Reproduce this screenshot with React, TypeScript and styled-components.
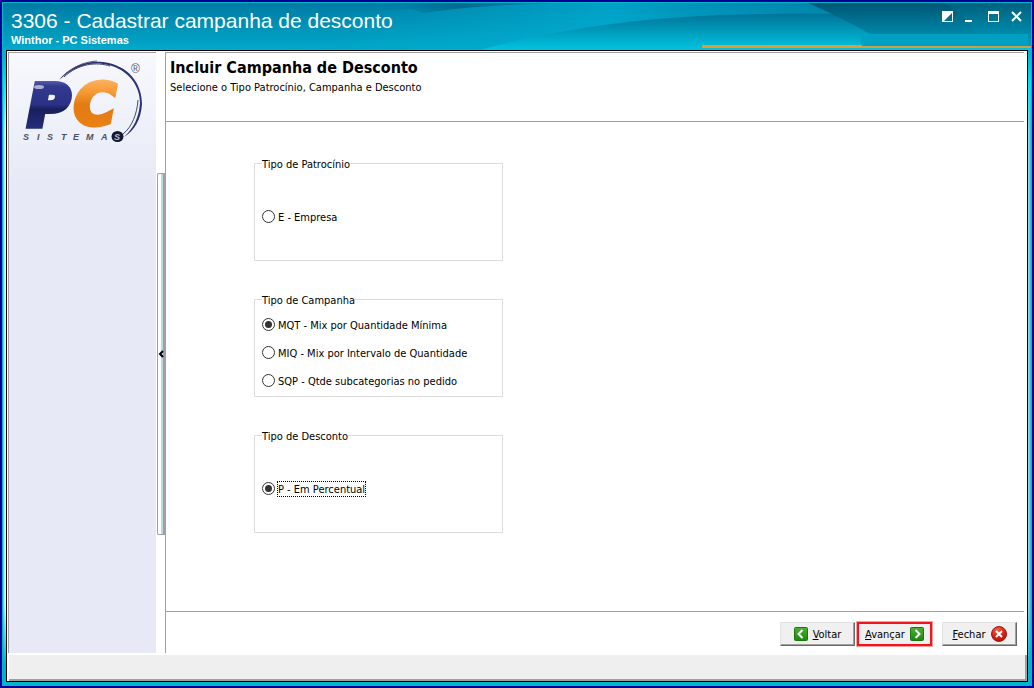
import React from 'react';
import styled, { createGlobalStyle } from 'styled-components';

const GlobalStyle = createGlobalStyle`
  *, *::before, *::after { box-sizing: border-box; }
  body { margin: 0; background: #000080; }
  body, button, input {
    font-family: 'DejaVu Sans Condensed', Tahoma, sans-serif;
    font-size: 11px;
    line-height: 13px;
    color: #000;
  }
`;

const AppWindow = styled.div`
  display: flex;
  flex-direction: column;
  min-height: 100vh;
  border: 2px solid #000090;
`;

const Frame = styled.div`
  display: flex;
  flex-direction: column;
  flex: 1;
  padding: 0 3px 3px;
  border: 1px solid #00b4cc;
  background:
    linear-gradient(#00a4c4 0, #00b4cc 52px, #00e0f0 78px, transparent 130px, transparent 88%, #00b4cc 97%),
    linear-gradient(90deg, #40c8d8 0, #d8fafc 2px, #fff 3px, #fff 50%, #a0e4ec calc(100% - 3px), #20bcd0 100%);
`;

const TitleBar = styled.header`
  position: relative;
  display: flex;
  justify-content: space-between;
  height: 47px;
  margin: 0 -3px;
  padding: 6px 8px 0;
  color: #fff;
  font-family: 'Liberation Sans', Arial, sans-serif;
`;

const Waves = styled.svg`
  position: absolute;
  inset: 0;
  width: 100%;
  height: 100%;
`;

const Titles = styled.div`
  position: relative;
`;

const Title = styled.h1`
  margin: 0;
  font-size: 21px;
  line-height: 24px;
  font-weight: 400;
`;

const Subtitle = styled.p`
  margin: 0;
  font-size: 11px;
  line-height: 14px;
  font-weight: 700;
`;

const WindowButtons = styled.div`
  position: relative;
  display: flex;
  gap: 11px;
  height: 13px;
  margin-top: 1px;
`;

const WindowButton = styled.button`
  display: flex;
  padding: 0;
  border: 0;
  background: none;
  color: #fff;
`;

const Client = styled.div`
  display: flex;
  flex-direction: column;
  flex: 1;
  border: 1px solid #000;
  background: #fff;
`;

const Panels = styled.div`
  display: flex;
  flex: 1;
  margin: 1px 0 0 1px;
`;

const Sidebar = styled.aside`
  width: 148px;
  flex: none;
  border-top: 1px solid #a0a0a0;
  border-left: 1px solid #a0a0a0;
  background: linear-gradient(#f8f8fd 0, #f0f2fa 60px, #e7eaf6 130px);
`;

const Splitter = styled.div`
  display: flex;
  flex-direction: column;
  flex: none;
  width: 9px;
  padding: 121px 0 118px 1px;
`;

const SplitterGrip = styled.button`
  flex: 1;
  display: flex;
  align-items: center;
  padding: 0;
  border: 1px solid #a0a0a0;
  border-right: 0;
  border-radius: 2px 0 0 2px;
  background: linear-gradient(90deg, #fff 3px, #b9d9e8 3px, #b9d9e8 5px, #a0a0a0 5px);
`;

const Main = styled.main`
  display: flex;
  flex-direction: column;
  flex: 1;
  margin-right: 3px;
  border-top: 1px solid #a0a0a0;
  border-left: 1px solid #a0a0a0;
`;

const PageHeader = styled.div`
  height: 69px;
  padding: 5px 4px;
  border-bottom: 1px solid #a0a0a0;
`;

const Heading = styled.h2`
  margin: 0 0 3px;
  font-size: 16px;
  line-height: 20px;
  font-weight: 700;
`;

const Description = styled.p`
  margin: 0;
`;

const Form = styled.form`
  display: flex;
  flex-direction: column;
  gap: 31px;
  flex: 1;
  padding: 34px 88px;
`;

const Group = styled.fieldset`
  width: 249px;
  height: 105px;
  margin: 0;
  padding: 0 7px;
  border: 1px solid #dcdcdc;
`;

const Legend = styled.legend`
  padding: 2px 0 0;
`;

const Options = styled.div`
  display: flex;
  flex-direction: column;
  justify-content: center;
  height: 89px;
  padding-top: 2px;
`;

const Option = styled.label`
  display: flex;
  align-items: center;
  gap: 2px;
  height: 28px;
`;

const Radio = styled.input`
  appearance: none;
  width: 13px;
  height: 13px;
  margin: 0;
  padding: 2px;
  border: 1px solid #333;
  border-radius: 50%;
  background: #fff content-box;
  &:checked { background-color: #333; }
`;

const OptionText = styled.span<{ $focused?: boolean }>`
  padding-top: 1px;
  border: 1px dotted ${p => (p.$focused ? '#000' : 'transparent')};
`;

const Actions = styled.div`
  display: flex;
  justify-content: flex-end;
  height: 42px;
  padding: 10px 7px 0;
  border-top: 1px solid #a0a0a0;
`;

const ActionButton = styled.button<{ $highlight?: boolean; $apart?: boolean }>`
  display: flex;
  align-items: center;
  justify-content: center;
  gap: 5px;
  width: 75px;
  height: 24px;
  margin-left: ${p => (p.$apart ? 10 : 2)}px;
  padding: 0;
  border: 1px solid;
  border-color: #e3e3e3 #696969 #696969 #e3e3e3;
  box-shadow: inset -1px -1px #a0a0a0;
  background: #f0f0f0;
  ${p => p.$highlight && 'border: 2px solid #f5141b; box-shadow: 0 0 0 1px #f9a0a0;'}
`;

const StatusBar = styled.footer`
  height: 26px;
  margin: 2px 0 0 2px;
  border: 2px solid #a0a0a0;
  border-width: 0 2px 2px 0;
  background: #efefef;
`;

const Logo = () => (
  <svg width="147" height="110" viewBox="9 53 147 110" role="img" aria-label="PC Sistemas">
    <defs>
      <linearGradient id="blue" x1="0" y1="0" x2="0" y2="1">
        <stop offset="0" stopColor="#8c93d0" />
        <stop offset=".2" stopColor="#33398f" />
        <stop offset=".48" stopColor="#2b3184" />
        <stop offset=".55" stopColor="#191f5c" />
        <stop offset="1" stopColor="#2b358c" />
      </linearGradient>
      <linearGradient id="orange" x1="0" y1="0" x2="0" y2="1">
        <stop offset="0" stopColor="#ffc27a" />
        <stop offset=".3" stopColor="#f79a35" />
        <stop offset=".5" stopColor="#e37a12" />
        <stop offset="1" stopColor="#ee8418" />
      </linearGradient>
    </defs>
    <path d="M59 80C70 66 87 60 103 62C128 65 142 83 142 104C141 119 135 130 124 137C134 128 139 117 140 103C140 84 126 67 103 64C87 62 73 68 59 80Z" fill="#2a3272" />
    <path d="M64 77C79 63 97 62 110 66M138 100C137 114 132 127 123 134" fill="none" stroke="#40466f" strokeWidth="1" />
    <path d="M61 78C71 68 82 62 97 61" fill="none" stroke="#555a70" strokeWidth="1" />
    <g fontFamily="DejaVu Sans" fontWeight="700" fontStyle="italic" fontSize="57" strokeLinejoin="miter">
      <text x="74" y="125" fill="url(#orange)" stroke="url(#orange)" strokeWidth="5">C</text>
      <text x="28" y="126" fill="url(#blue)" stroke="url(#blue)" strokeWidth="6">P</text>
    </g>
    <ellipse cx="39" cy="87" rx="5" ry="2" fill="#fff" opacity=".6" />
    <ellipse cx="117.500" cy="136.500" rx="6" ry="5.500" fill="#14172f" />
    <g fontFamily="Liberation Sans" fontStyle="italic" fontSize="9" fontWeight="700">
      <text x="23 37 47 61 73 86 101" y="140" fill="#4c4f5e">SISTEMA</text>
      <text x="114" y="140" fill="#bbbfd0">S</text>
    </g>
    <text x="131" y="73" fontFamily="Liberation Sans" fontSize="12" fill="#555a70">®</text>
  </svg>
);

const HeaderWaves = () => (
  <Waves viewBox="3 3 1028 47" preserveAspectRatio="none" aria-hidden="true">
    <defs>
      <linearGradient id="base" x1="0" y1="0" x2="0" y2="1">
        <stop offset="0" stopColor="#007ba4" />
        <stop offset="1" stopColor="#00a9ca" />
      </linearGradient>
      <linearGradient id="upper" x1="0" y1="0" x2="1" y2="0">
        <stop offset="0" stopColor="#00b0d0" stopOpacity="0" />
        <stop offset=".4" stopColor="#00b0d4" stopOpacity=".7" />
        <stop offset=".7" stopColor="#0090b4" stopOpacity=".4" />
        <stop offset="1" stopColor="#0090b4" stopOpacity=".4" />
      </linearGradient>
      <linearGradient id="lower" x1="0" y1="0" x2="0" y2="1">
        <stop offset="0" stopColor="#007397" />
        <stop offset=".5" stopColor="#009cbc" />
        <stop offset="1" stopColor="#00c4e0" />
      </linearGradient>
      <linearGradient id="dark" x1="0" y1="0" x2="0" y2="1">
        <stop offset="0" stopColor="#005574" />
        <stop offset="1" stopColor="#0087a8" />
      </linearGradient>
      <linearGradient id="corner" x1="0" y1="0" x2="0" y2="1">
        <stop offset="0" stopColor="#00607e" />
        <stop offset="1" stopColor="#009cbc" />
      </linearGradient>
      <linearGradient id="shade" x1="0" y1="0" x2="1" y2="0">
        <stop offset="0" stopColor="#006a90" stopOpacity="0" />
        <stop offset=".4" stopColor="#006a90" />
        <stop offset="1" stopColor="#007ea6" />
      </linearGradient>
    </defs>
    <rect x="3" y="3" width="1028" height="47" fill="url(#base)" />
    <path d="M330 50V14Q430 7 550 3H1031V50Z" fill="url(#upper)" />
    <path d="M400 3H550Q470 6 424 13Q410 10 400 3Z" fill="url(#shade)" />
    <path d="M480 50Q590 20 720 15Q870 10 1031 22V50Z" fill="url(#lower)" />
    <path d="M808 3H1031V34H870Q842 18 808 3Z" fill="url(#dark)" />
    <path d="M945 3H1031V46H984Q970 18 945 3Z" fill="url(#corner)" />
    <rect x="861" y="34" width="167" height="12" fill="#00a0c2" />
    <rect x="702" y="45" width="160" height="3" fill="#e99a2c" />
    <rect x="861" y="46" width="170" height="2" fill="#cf9d42" />
  </Waves>
);

const Arrow = ({ back }: { back?: boolean }) => (
  <svg width="14" height="14" viewBox="0 0 14 14" aria-hidden="true">
    <defs>
      <linearGradient id="green" x1="0" y1="0" x2="0" y2="1">
        <stop offset="0" stopColor="#4fae35" />
        <stop offset="1" stopColor="#188a0c" />
      </linearGradient>
    </defs>
    <rect x=".5" y=".5" width="13" height="13" rx="1" fill="url(#green)" stroke="#19780f" />
    <path d={back ? 'M8.500 3L4.500 7L8.500 11' : 'M5.500 3L9.500 7L5.500 11'} fill="none" stroke="#fff" strokeWidth="2" />
  </svg>
);

const CloseIcon = () => (
  <svg width="16" height="16" viewBox="0 0 16 16" aria-hidden="true">
    <defs>
      <radialGradient id="red" cx=".4" cy=".25" r=".8">
        <stop offset="0" stopColor="#f0604c" />
        <stop offset=".6" stopColor="#d6200f" />
        <stop offset="1" stopColor="#b01008" />
      </radialGradient>
    </defs>
    <circle cx="8" cy="8" r="7.500" fill="url(#red)" stroke="#a5180f" />
    <path d="M5 5L11 11M11 5L5 11" stroke="#fff" strokeWidth="2" />
  </svg>
);

type Choice = { label: string; checked?: boolean; focused?: boolean };

const groups: { name: string; title: string; choices: Choice[] }[] = [
  { name: 'patrocinio', title: 'Tipo de Patrocínio', choices: [{ label: 'E - Empresa' }] },
  {
    name: 'campanha',
    title: 'Tipo de Campanha',
    choices: [
      { label: 'MQT - Mix por Quantidade Mínima', checked: true },
      { label: 'MIQ - Mix por Intervalo de Quantidade' },
      { label: 'SQP - Qtde subcategorias no pedido' },
    ],
  },
  { name: 'desconto', title: 'Tipo de Desconto', choices: [{ label: 'P - Em Percentual', checked: true, focused: true }] },
];

export default function App() {
  return (
    <AppWindow>
      <GlobalStyle />
      <Frame>
        <TitleBar>
          <HeaderWaves />
          <Titles>
            <Title>3306 - Cadastrar campanha de desconto</Title>
            <Subtitle>Winthor - PC Sistemas</Subtitle>
          </Titles>
          <WindowButtons>
            <WindowButton aria-label="Alternar">
              <svg width="12" height="13" fill="currentColor"><path d="M0 1H11V12H0ZM10 3L2 11H10Z" fillRule="evenodd" /></svg>
            </WindowButton>
            <WindowButton aria-label="Minimizar">
              <svg width="12" height="13" fill="currentColor"><path d="M0 10H7V12H0Z" /></svg>
            </WindowButton>
            <WindowButton aria-label="Maximizar">
              <svg width="12" height="13" fill="currentColor"><path d="M0 1H11V12H0ZM1 4V11H10V4Z" fillRule="evenodd" /></svg>
            </WindowButton>
            <WindowButton aria-label="Fechar janela">
              <svg width="12" height="13" stroke="currentColor" strokeWidth="2"><path d="M1 2L10 11M10 2L1 11" /></svg>
            </WindowButton>
          </WindowButtons>
        </TitleBar>
        <Client>
          <Panels>
            <Sidebar><Logo /></Sidebar>
            <Splitter>
              <SplitterGrip aria-label="Recolher painel">
                <svg width="6" height="8" fill="none" stroke="#000" strokeWidth="2"><path d="M5 1L2 4L5 7" /></svg>
              </SplitterGrip>
            </Splitter>
            <Main>
              <PageHeader>
                <Heading>Incluir Campanha de Desconto</Heading>
                <Description>Selecione o Tipo Patrocínio, Campanha e Desconto</Description>
              </PageHeader>
              <Form>
                {groups.map(group => (
                  <Group key={group.name}>
                    <Legend>{group.title}</Legend>
                    <Options>
                      {group.choices.map(choice => (
                        <Option key={choice.label}>
                          <Radio type="radio" name={group.name} defaultChecked={choice.checked} />
                          <OptionText $focused={choice.focused}>{choice.label}</OptionText>
                        </Option>
                      ))}
                    </Options>
                  </Group>
                ))}
              </Form>
              <Actions>
                <ActionButton><Arrow back /><span><u>V</u>oltar</span></ActionButton>
                <ActionButton $highlight><span><u>A</u>vançar</span><Arrow /></ActionButton>
                <ActionButton $apart><span><u>F</u>echar</span><CloseIcon /></ActionButton>
              </Actions>
            </Main>
          </Panels>
          <StatusBar />
        </Client>
      </Frame>
    </AppWindow>
  );
}
